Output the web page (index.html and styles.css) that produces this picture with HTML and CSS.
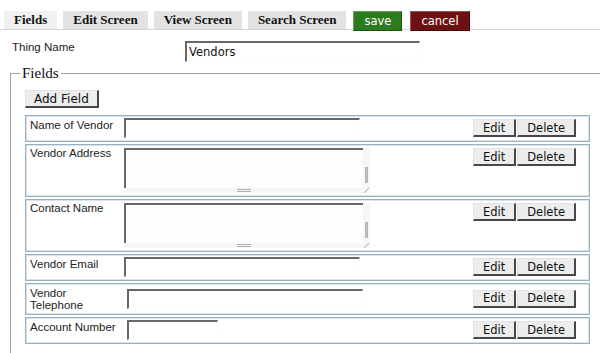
FILE: index.html
```html
<!DOCTYPE html>
<html lang="en">
<head>
  <meta charset="UTF-8">
  <title>Vendors</title>
  <link rel="stylesheet" href="styles.css">
</head>
<body>
  <div class="tabs">
    <span class="tab active">Fields</span>
    <span class="tab">Edit Screen</span>
    <span class="tab">View Screen</span>
    <span class="tab">Search Screen</span>
    <button class="action save">save</button>
    <button class="action cancel">cancel</button>
  </div>

  <div class="thing">
    <label class="thing-label">Thing Name</label>
    <input class="field thing-input" value="Vendors">
  </div>

  <fieldset class="fields">
    <legend>Fields</legend>
    <button class="btn add">Add Field</button>
    <div class="rows">
      <div class="row">
        <div class="label">Name of Vendor</div>
        <input class="field">
        <div class="actions"><button class="btn">Edit</button><button class="btn">Delete</button></div>
      </div>
      <div class="row tall">
        <div class="label">Vendor Address</div>
        <div class="ta">
          <div class="ta-body"></div>
          <div class="ta-track"><span class="ta-thumb"></span></div>
          <div class="ta-bottom"><span class="ta-grip"></span></div>
          <div class="ta-corner"></div>
        </div>
        <div class="actions"><button class="btn">Edit</button><button class="btn">Delete</button></div>
      </div>
      <div class="row tall">
        <div class="label">Contact Name</div>
        <div class="ta">
          <div class="ta-body"></div>
          <div class="ta-track"><span class="ta-thumb"></span></div>
          <div class="ta-bottom"><span class="ta-grip"></span></div>
          <div class="ta-corner"></div>
        </div>
        <div class="actions"><button class="btn">Edit</button><button class="btn">Delete</button></div>
      </div>
      <div class="row">
        <div class="label">Vendor Email</div>
        <input class="field">
        <div class="actions"><button class="btn">Edit</button><button class="btn">Delete</button></div>
      </div>
      <div class="row alt">
        <div class="label">Vendor<br>Telephone</div>
        <input class="field">
        <div class="actions"><button class="btn">Edit</button><button class="btn">Delete</button></div>
      </div>
      <div class="row alt">
        <div class="label">Account Number</div>
        <input class="field short">
        <div class="actions"><button class="btn">Edit</button><button class="btn">Delete</button></div>
      </div>
    </div>
  </fieldset>
</body>
</html>
```

FILE: styles.css
```css
html { overflow: hidden; }
body { margin: 0; background: #fff; color: #222; font-family: "Liberation Sans", Arial, sans-serif; }

.tabs { display: flex; align-items: flex-start; height: 18px; padding: 11px 0 0 4px; border-bottom: 1px solid #d6d6d6; }
.tab { height: 18px; padding: 0 10px; margin-right: 6px; background: #e3e3e3; color: #111; font: bold 13px/18px "Liberation Serif", "Times New Roman", serif; }
.tab.active { background: #f1f1f1; }
.action { height: 20px; margin: 0 0 0 1px; padding: 0 10px; border: 1px solid; color: #fff; font: 11.5px "DejaVu Sans", sans-serif; }
.save { background: #2d7b1f; border-color: #62a352 #1b5410 #1b5410 #62a352; margin-right: 7px; }
.cancel { background: #6d1212; border-color: #a55050 #440808 #440808 #a55050; }

.thing { display: flex; align-items: flex-start; padding: 11px 0 0 12px; }
.thing-label { width: 173px; font-size: 11.5px; line-height: 13px; }

.field { box-sizing: border-box; width: 236px; height: 20px; margin: 0; padding: 0 2px; background: #fff; border-style: solid; border-width: 2px 1px 1px 2px; border-color: #686868 #fbfbfb #fbfbfb #686868; color: #111; font: 11.5px "DejaVu Sans", sans-serif; outline: none; }
.thing-input { width: 235px; height: 21px; }
.field.short { width: 91px; }

.fields { margin: 2px -20px 0 10px; padding: 8px 0 20px 14px; border: 1px solid #a3a3a3; }
.fields legend { margin-left: -5px; padding: 0 2px; font: 15px/18px "Liberation Serif", "Times New Roman", serif; color: #111; }

.btn { box-sizing: border-box; height: 18px; margin: 0; padding: 0 9px; background: #ededed; border-style: solid; border-width: 1px 2px 2px 1px; border-color: #e2e2e2 #474747 #474747 #e2e2e2; color: #111; font: 11.5px "DejaVu Sans", sans-serif; }
.btn.add { display: block; margin-bottom: 7px; padding: 0 8px; font-size: 12px; }

.rows { width: 565px; }
.row { display: flex; align-items: center; margin-bottom: 2px; padding: 2px 13px 3px 4px; border: 1px solid #9bb0bd; box-shadow: inset 0 0 0 1px #d9e3e9; background: #fff; }
.row.tall { align-items: flex-start; padding-top: 1px; }
.label { flex: none; align-self: flex-start; width: 94px; padding-top: 1px; font-size: 11.5px; line-height: 12px; }
.row.alt .label { width: 97px; }
.actions { display: flex; gap: 1px; margin-left: auto; }
.row.tall .actions, .row.tall .ta { margin-top: 2px; }

.ta { display: grid; grid-template-columns: 1fr 7px; grid-template-rows: 1fr 5px; width: 246px; height: 45px; }
.ta-body { border-top: 2px solid #686868; border-left: 2px solid #686868; background: #fdfdfd; }
.ta-track { display: flex; align-items: flex-end; justify-content: center; padding-bottom: 5px; background: #f6f6f6; }
.ta-thumb { width: 3px; height: 16px; background: #b9b9b9; }
.ta-bottom { display: flex; align-items: center; justify-content: center; background: #f6f6f6; }
.ta-grip { width: 14px; height: 1px; border-top: 1px solid #b0b0b0; border-bottom: 1px solid #b0b0b0; }
.ta-corner { background: linear-gradient(135deg, #f6f6f6 45%, #a8a8a8 45%, #a8a8a8 58%, #f6f6f6 58%); }
```
